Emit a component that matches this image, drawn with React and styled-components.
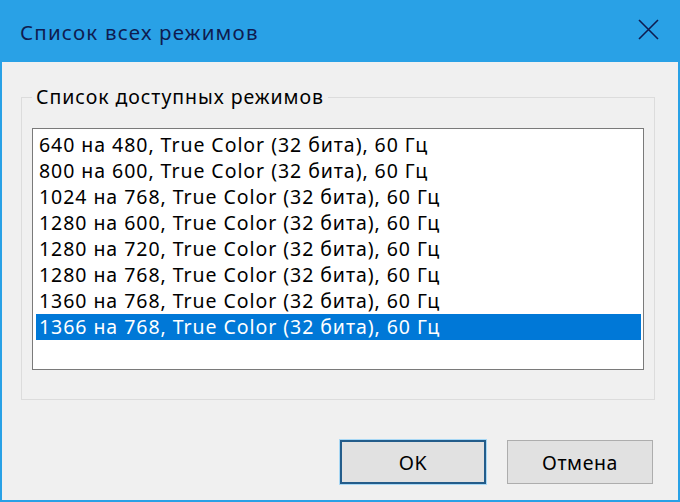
import React from "react";
import styled, { createGlobalStyle } from "styled-components";

const Global = createGlobalStyle`
  html, body { margin: 0; padding: 0; background: #f0f0f0; }
  * { box-sizing: border-box; }
`;

const Window = styled.div`
  width: 680px;
  height: 502px;
  display: flex;
  flex-direction: column;
  font-family: "Noto Sans", "Open Sans", sans-serif;
  overflow: hidden;
`;

const TitleBar = styled.div`
  height: 62px;
  flex: none;
  background: #29a1e6;
  display: flex;
  align-items: center;
  justify-content: space-between;
  padding: 0 20px 0 20px;
  color: #0f1c50;
`;

const Title = styled.div`
  font-size: 20.5px;
  letter-spacing: 1.2px;
  line-height: 26px;
  margin-top: 1px;
`;

const CloseBtn = styled.div`
  width: 22px;
  height: 22px;
  display: flex;
  align-items: center;
  justify-content: center;
  margin-right: 1px;
  margin-top: -3px;
`;

const Body = styled.div`
  flex: 1;
  background: #f0f0f0;
  border: 2px solid #29a1e6;
  border-top: none;
  padding: 35px 23px 16px 19px;
  display: flex;
  flex-direction: column;
`;

const GroupBox = styled.div`
  border: 1px solid #dcdcdc;
  padding: 0 10px 29px 10px;
  display: flex;
  flex-direction: column;
`;

const Legend = styled.div`
  align-self: flex-start;
  margin: -14px 0 0 0;
  padding: 0 4px;
  background: #f0f0f0;
  font-size: 19.5px;
  letter-spacing: 0.95px;
  line-height: 26px;
  color: #000;
`;

const ListBox = styled.div`
  margin-top: 18px;
  height: 242px;
  border: 1px solid #7a7a7a;
  background: #fff;
  padding: 3px 2px 3px 3px;
  display: flex;
  flex-direction: column;
`;

const Item = styled.div`
  height: 26px;
  line-height: 26px;
  padding-left: 3px;
  font-size: 19.5px;
  letter-spacing: 0.95px;
  white-space: nowrap;
  color: ${(p) => (p.$selected ? "#ffffff" : "#000000")};
  background: ${(p) => (p.$selected ? "#0078d7" : "transparent")};
`;

const ButtonRow = styled.div`
  margin-top: auto;
  display: flex;
  justify-content: flex-end;
  gap: 21px;
  padding-right: 2px;
`;

const Button = styled.div`
  width: 146px;
  height: 44px;
  display: flex;
  align-items: center;
  justify-content: center;
  background: #e1e1e1;
  border: ${(p) => (p.$default ? "2px solid #235c8a" : "1px solid #adadad")};
  box-shadow: ${(p) => (p.$default ? "0 0 0 1px #a8d8f5" : "none")};
  font-size: 19.5px;
  letter-spacing: 0.6px;
  color: #000;
`;

const modes = [
  "640 на 480, True Color (32 бита), 60 Гц",
  "800 на 600, True Color (32 бита), 60 Гц",
  "1024 на 768, True Color (32 бита), 60 Гц",
  "1280 на 600, True Color (32 бита), 60 Гц",
  "1280 на 720, True Color (32 бита), 60 Гц",
  "1280 на 768, True Color (32 бита), 60 Гц",
  "1360 на 768, True Color (32 бита), 60 Гц",
  "1366 на 768, True Color (32 бита), 60 Гц",
];

export default function App() {
  return (
    <>
      <Global />
      <Window>
        <TitleBar>
          <Title>Список всех режимов</Title>
          <CloseBtn>
            <svg width="21" height="21" viewBox="0 0 21 21">
              <path d="M1 1 L20 20 M20 1 L1 20" stroke="#0f1c50" strokeWidth="1.6" fill="none" />
            </svg>
          </CloseBtn>
        </TitleBar>
        <Body>
          <GroupBox>
            <Legend>Список доступных режимов</Legend>
            <ListBox>
              {modes.map((m, i) => (
                <Item key={m} $selected={i === modes.length - 1}>
                  {m}
                </Item>
              ))}
            </ListBox>
          </GroupBox>
          <ButtonRow>
            <Button $default>OK</Button>
            <Button>Отмена</Button>
          </ButtonRow>
        </Body>
      </Window>
    </>
  );
}
